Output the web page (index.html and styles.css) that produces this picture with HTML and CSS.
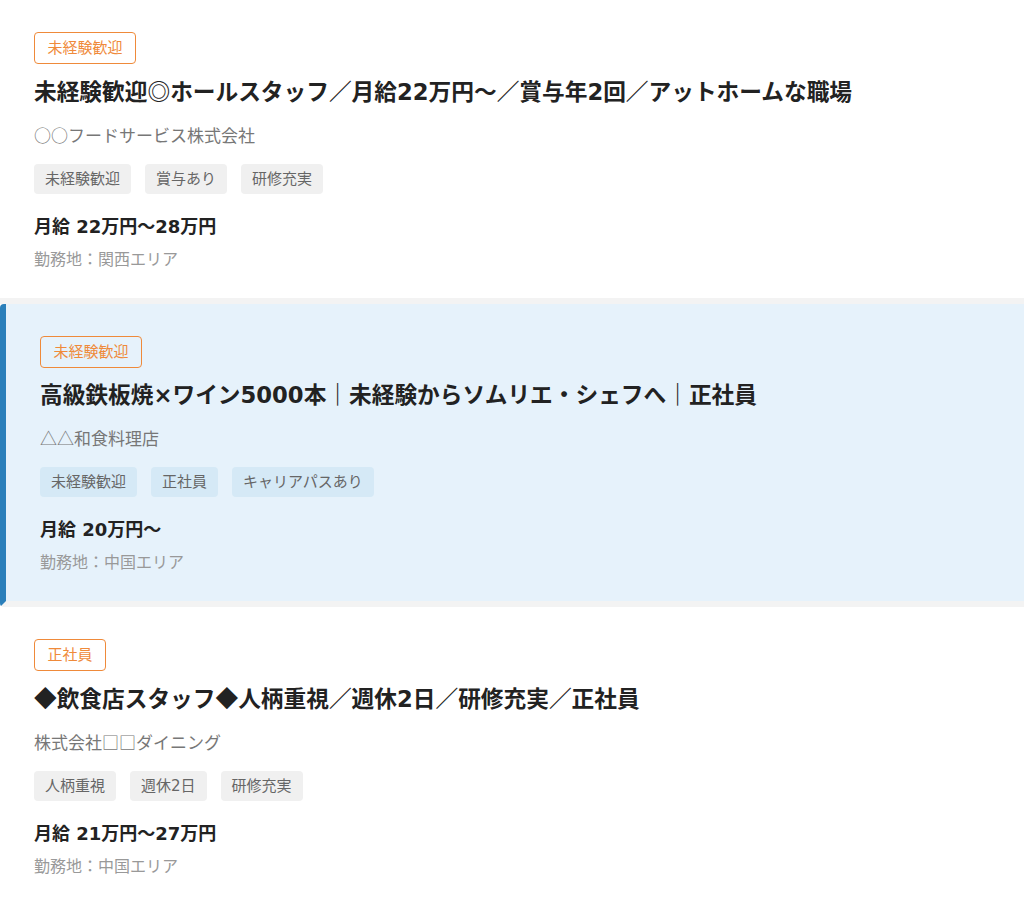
FILE: index.html
```html
<!DOCTYPE html>
<html lang="ja">
<head>
<meta charset="utf-8">
<title>求人一覧</title>
<link rel="stylesheet" href="styles.css">
</head>
<body>
<div class="list">
  <article class="card">
    <span class="badge">未経験歓迎</span>
    <h2 class="title">未経験歓迎<span class="sym">◎</span>ホールスタッフ／月給22万円～／賞与年2回／アットホームな職場</h2>
    <p class="company"><span class="sym">○○</span>フードサービス株式会社</p>
    <ul class="tags">
      <li class="tag">未経験歓迎</li>
      <li class="tag">賞与あり</li>
      <li class="tag">研修充実</li>
    </ul>
    <p class="salary">月給 22万円～28万円</p>
    <p class="location">勤務地：関西エリア</p>
  </article>
  <article class="card active">
    <span class="badge">未経験歓迎</span>
    <h2 class="title">高級鉄板焼×ワイン5000本｜未経験からソムリエ・シェフへ｜正社員</h2>
    <p class="company"><span class="sym">△△</span>和食料理店</p>
    <ul class="tags">
      <li class="tag">未経験歓迎</li>
      <li class="tag">正社員</li>
      <li class="tag">キャリアパスあり</li>
    </ul>
    <p class="salary">月給 20万円～</p>
    <p class="location">勤務地：中国エリア</p>
  </article>
  <article class="card">
    <span class="badge">正社員</span>
    <h2 class="title"><span class="sym">◆</span>飲食店スタッフ<span class="sym">◆</span>人柄重視／週休2日／研修充実／正社員</h2>
    <p class="company">株式会社<span class="sym">□□</span>ダイニング</p>
    <ul class="tags">
      <li class="tag">人柄重視</li>
      <li class="tag">週休2日</li>
      <li class="tag">研修充実</li>
    </ul>
    <p class="salary">月給 21万円～27万円</p>
    <p class="location">勤務地：中国エリア</p>
  </article>
</div>
</body>
</html>
```
FILE: styles.css
```css
* { box-sizing: border-box; }
html, body {
  margin: 0;
  padding: 0;
  background: #fff;
}
body {
  font-family: "DejaVu Sans", "Noto Sans CJK JP", sans-serif;
  color: #222;
}
.sym {
  font-family: "Noto Sans CJK JP", sans-serif;
}
.list {
  display: flex;
  flex-direction: column;
}
.card {
  display: flex;
  flex-direction: column;
  align-items: flex-start;
  padding: 32px 34px 26px;
  border-bottom: 6px solid #f3f3f3;
  background: #fff;
}
.card:last-child { border-bottom: none; }
.card.active {
  background: #e6f2fb;
  border-left: 6px solid #2a7fba;
  border-radius: 4px 0 0 4px;
}
.badge {
  display: inline-block;
  font-size: 15px;
  line-height: 22px;
  padding: 3.5px 12.5px 4.5px;
  color: #ef8a3a;
  border: 1.5px solid #ef8a3a;
  border-radius: 4px;
  background: transparent;
}
.title {
  margin: 11px 0 0;
  font-size: 22.7px;
  line-height: 32px;
  font-weight: 700;
  color: #222;
}
.company {
  margin: 14px 0 0;
  font-size: 17px;
  line-height: 26px;
  color: #777;
}
.tags {
  list-style: none;
  margin: 15px 0 0;
  padding: 0;
  display: flex;
  gap: 14px;
}
.tag {
  font-size: 15px;
  line-height: 20px;
  padding: 5px 11px;
  background: #f0f0f0;
  color: #666;
  border-radius: 4px;
}
.active .tag { background: #d5e9f6; }
.salary {
  margin: 19px 0 0;
  font-size: 18px;
  line-height: 27px;
  font-weight: 700;
  color: #222;
}
.location {
  margin: 8px 0 0;
  font-size: 16px;
  line-height: 24px;
  color: #999;
}
```
